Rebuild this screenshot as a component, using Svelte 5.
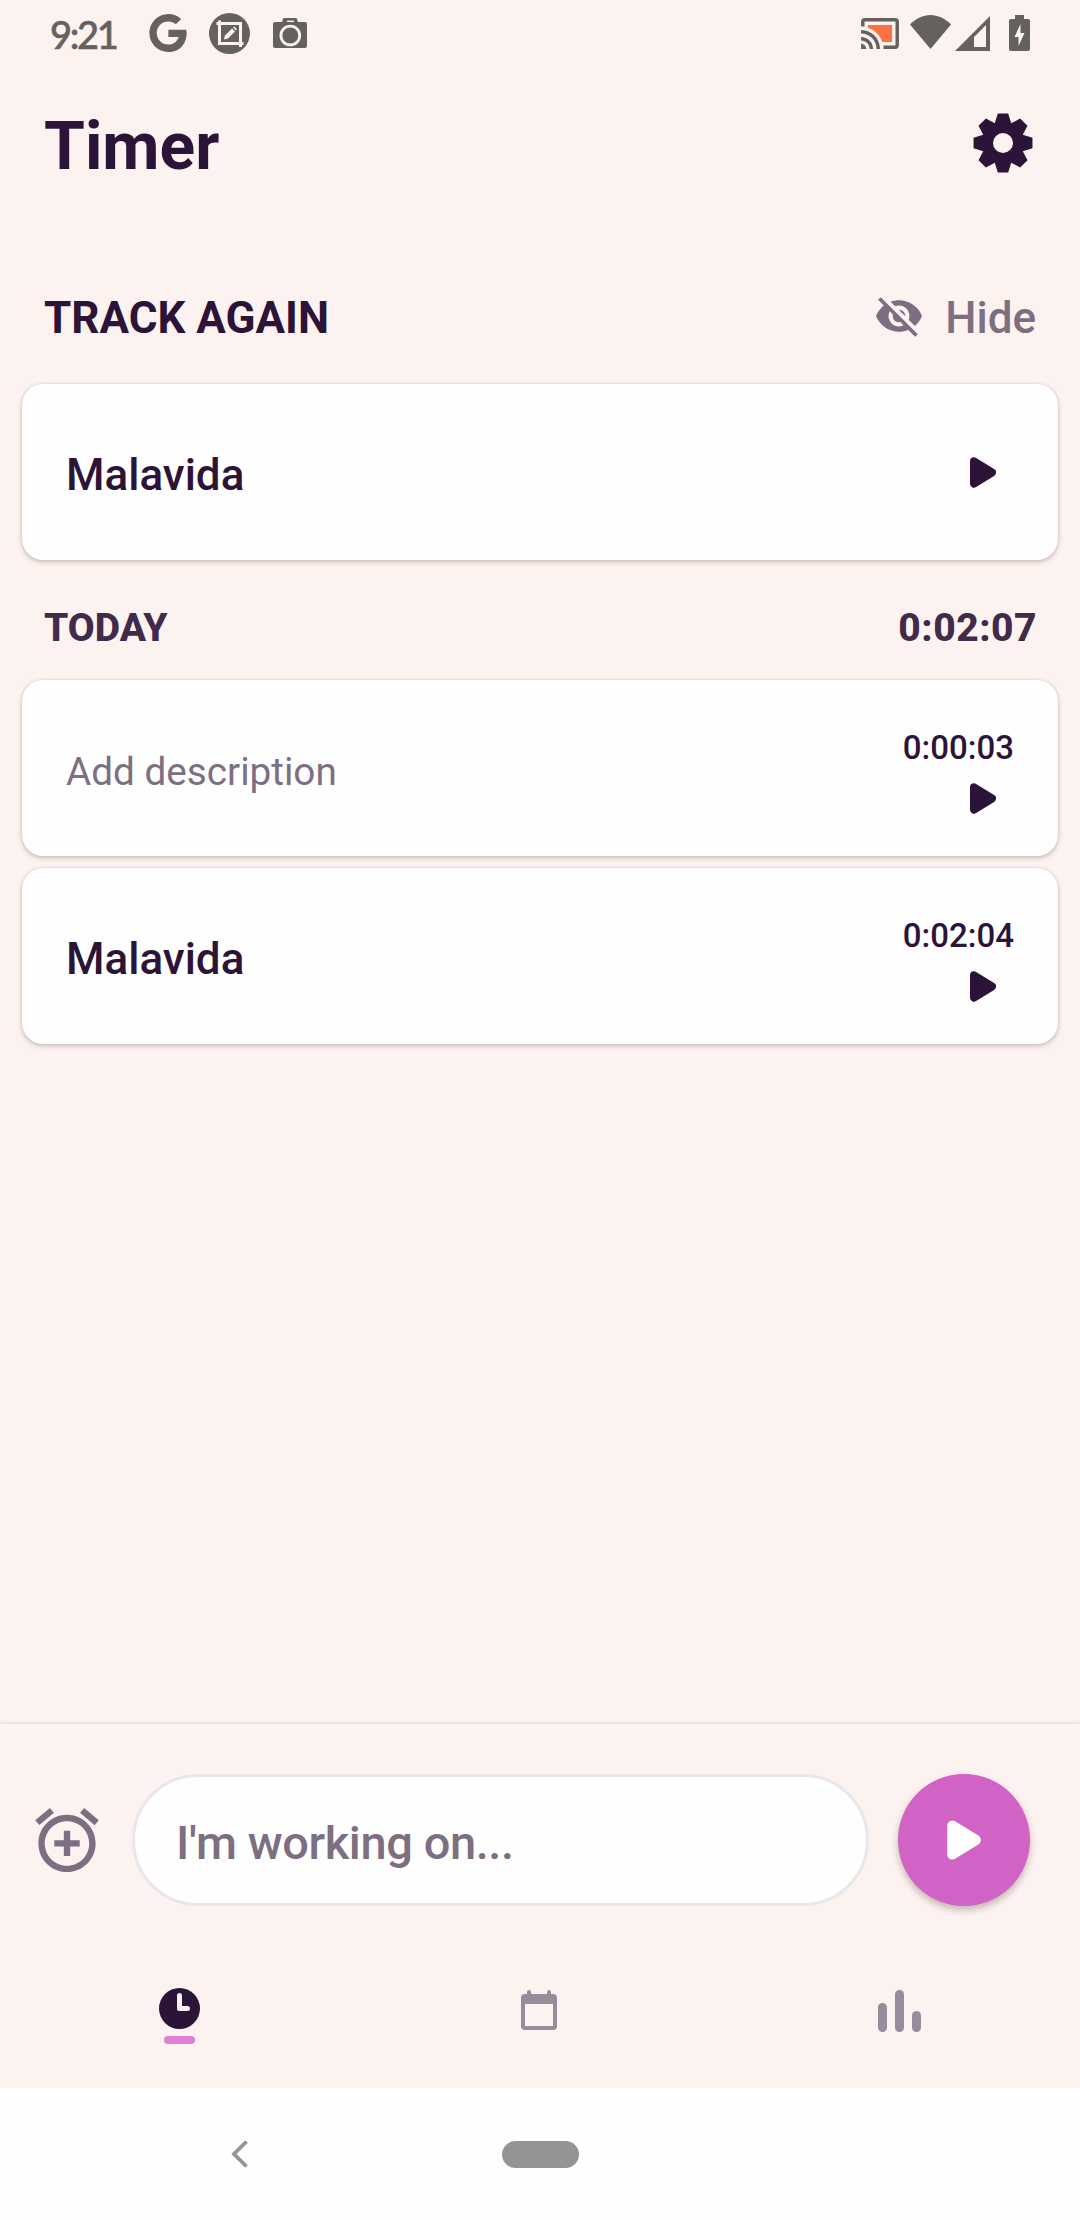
<script lang="ts">
    let clock = "9:21";
    let total = "0:02:07";

    const entries = [
        { id: 1, description: "", duration: "0:00:03" },
        { id: 2, description: "Malavida", duration: "0:02:04" },
    ];

    // eight teeth, with a single valley point between two neighbours
    const gearPoints = () => {
        const points: string[] = [];
        const add = (r: number, deg: number) => {
            const a = (deg * Math.PI) / 180;
            points.push(`${(r * Math.sin(a)).toFixed(2)},${(-r * Math.cos(a)).toFixed(2)}`);
        };
        for (let i = 0; i < 8; i++) {
            add(29.9, i * 45 - 10);
            add(29.9, i * 45 + 10);
            add(21.4, i * 45 + 22.5);
        }
        return points.join(" ");
    };
</script>

{#snippet play(width: number, height: number)}
    <svg class="play" {width} {height} viewBox="0 0 26 31">
        <path d="M4 4.3L22 15.5L4 26.7Z" fill="currentColor" stroke="currentColor" stroke-width="8" stroke-linejoin="round" />
    </svg>
{/snippet}

<div class="screen">
    <div class="status">
        <span class="clock">{clock}</span>
        <svg class="google" width="38" height="38" viewBox="2.5 2 19.7 20">
            <path fill="currentColor" d="M12.545 10.239v3.821h5.445c-.712 2.315-2.647 3.972-5.445 3.972a6.033 6.033 0 1 1 0-12.064c1.498 0 2.866.549 3.921 1.453l2.814-2.814A9.97 9.97 0 0 0 12.545 2C7.021 2 2.543 6.477 2.543 12s4.478 10 10.002 10c8.396 0 10.249-7.85 9.426-11.748z" />
        </svg>
        <svg class="crop" width="41" height="41" viewBox="0 0 41 41">
            <circle cx="20.5" cy="20.5" r="20.5" fill="currentColor" />
            <path d="M7.5 10.5H31.5V34M10.5 7.5V30.5H34.5" fill="none" stroke="#fcf2ef" stroke-width="3" />
            <path d="M15 26.5l1-4 7-7 3 3-7 7z" fill="#fcf2ef" />
            <path d="M24 14.5l1.3-1 2.7 2.7-1 1.3z" fill="#fcf2ef" />
        </svg>
        <svg class="camera" width="34" height="30" viewBox="0 0 34 30">
            <path fill="currentColor" d="M2 4h7l1.5-4h13L25 4h7a2 2 0 0 1 2 2v22a2 2 0 0 1-2 2H2a2 2 0 0 1-2-2V6a2 2 0 0 1 2-2z" />
            <circle cx="17.3" cy="17.5" r="9.4" fill="none" stroke="#fcf2ef" stroke-width="2.8" />
            <path d="M14 3.3h7" stroke="#fcf2ef" stroke-width="1.4" />
        </svg>

        <svg class="cast" width="38" height="31" viewBox="1 3 22 18">
            <path fill="currentColor" d="M1 18v3h3c0-1.66-1.34-3-3-3zm0-4v2c2.76 0 5 2.24 5 5h2c0-3.87-3.13-7-7-7zm0-4v2c4.97 0 9 4.03 9 9h2c0-6.08-4.93-11-11-11zM21 3H3c-1.1 0-2 .9-2 2v3h2V5h18v14h-7v2h7c1.1 0 2-.9 2-2V5c0-1.1-.9-2-2-2z" />
            <path fill="#ff7043" d="M19 7H5v1.63c3.96 1.28 7.09 4.41 8.37 8.37H19V7z" />
        </svg>
        <svg class="wifi" width="41" height="34" viewBox="0 0 41 34">
            <path fill="currentColor" d="M20.5 34L0 9.5C6 3.5 13 0 20.5 0S35 3.5 41 9.5z" />
        </svg>
        <svg class="signal" width="35" height="35" viewBox="0 0 35 35">
            <path fill="currentColor" fill-rule="evenodd" d="M35 0V35H0zM31 9L19 21V31H31z" />
        </svg>
        <svg class="battery" width="21" height="36" viewBox="0 0 21 36">
            <path fill="currentColor" d="M6 0h9v4h4a2 2 0 0 1 2 2v28a2 2 0 0 1-2 2H2a2 2 0 0 1-2-2V6a2 2 0 0 1 2-2h4z" />
            <path fill="#fcf2ef" d="M11.5 9L5.5 22h4v9l6-13h-4z" />
        </svg>
    </div>

    <header>
        <h1>Timer</h1>
        <svg class="gear" width="60" height="60" viewBox="-30 -30 60 60">
            <polygon points={gearPoints()} fill="currentColor" />
            <circle r="10" fill="#fcf2ef" />
        </svg>
    </header>

    <main>
        <div class="section">
            <h2>TRACK AGAIN</h2>
            <div class="hide">
                <svg width="46" height="40" viewBox="1 3 22 19">
                    <path fill="currentColor" d="M12 7c2.76 0 5 2.24 5 5 0 .65-.13 1.26-.36 1.83l2.92 2.92c1.51-1.26 2.7-2.89 3.43-4.75-1.73-4.39-6-7.5-11-7.5-1.4 0-2.74.25-3.98.7l2.16 2.16C10.74 7.13 11.35 7 12 7zM2 4.27l2.28 2.28.46.46C3.08 8.3 1.78 10.02 1 12c1.73 4.39 6 7.5 11 7.5 1.55 0 3.03-.3 4.38-.84l.42.42L19.73 22 21 20.73 3.27 3 2 4.27zM7.53 9.8l1.55 1.55c-.05.21-.08.43-.08.65 0 1.66 1.34 3 3 3 .22 0 .44-.03.65-.08l1.55 1.55c-.67.33-1.41.53-2.2.53-2.76 0-5-2.24-5-5 0-.79.2-1.53.53-2.2zm4.31-.78l3.15 3.15.02-.16c0-1.66-1.34-3-3-3l-.17.01z" />
                </svg>
                <span>Hide</span>
            </div>
        </div>
        <div class="card">
            <span class="name">Malavida</span>
            {@render play(26, 31)}
        </div>

        <div class="section today">
            <h3>TODAY</h3>
            <span class="total">{total}</span>
        </div>
        <div class="entries">
            {#each entries as entry (entry.id)}
                <div class="card">
                    <span class={entry.description ? "name" : "name empty"}>
                        {entry.description || "Add description"}
                    </span>
                    <div class="side">
                        <span class="duration">{entry.duration}</span>
                        {@render play(26, 31)}
                    </div>
                </div>
            {/each}
        </div>
    </main>

    <footer>
        <div class="composer">
            <svg class="alarm" width="64" height="64" viewBox="2 1.86 20 20.14">
                <path fill="currentColor" d="M7.88 3.39L6.6 1.86 2 5.71l1.29 1.53 4.59-3.85zM22 5.72l-4.6-3.86-1.29 1.53 4.6 3.86L22 5.72zM12 4c-4.97 0-9 4.03-9 9s4.02 9 9 9c4.97 0 9-4.03 9-9s-4.03-9-9-9zm0 16c-3.87 0-7-3.13-7-7s3.13-7 7-7 7 3.13 7 7-3.13 7-7 7zm1-11h-2v3H8v2h3v3h2v-3h3v-2h-3V9z" />
            </svg>
            <div class="field">I'm working on...</div>
            <div class="start">{@render play(34, 40)}</div>
        </div>
        <nav>
            <div class="tab active">
                <svg width="41" height="41" viewBox="0 0 41 41">
                    <circle cx="20.5" cy="20.5" r="20.5" fill="currentColor" />
                    <path d="M20.5 7.5V20.5H28.5" fill="none" stroke="#fcf2ef" stroke-width="5" stroke-linecap="round" stroke-linejoin="round" />
                </svg>
                <div class="marker"></div>
            </div>
            <div class="tab">
                <svg width="36" height="40" viewBox="0 0 36 40">
                    <path fill="currentColor" fill-rule="evenodd" d="M6 2a2 2 0 0 1 4 0V4H26V2a2 2 0 0 1 4 0V4H32a4 4 0 0 1 4 4V36a4 4 0 0 1-4 4H4a4 4 0 0 1-4-4V8a4 4 0 0 1 4-4H6zM4 14V36H32V14z" />
                </svg>
            </div>
            <div class="tab">
                <svg width="43" height="42" viewBox="0 0 43 42">
                    <g fill="currentColor">
                        <rect x="0" y="13" width="9" height="29" rx="4.5" />
                        <rect x="17" y="0" width="9" height="42" rx="4.5" />
                        <rect x="34" y="21" width="9" height="21" rx="4.5" />
                    </g>
                </svg>
            </div>
        </nav>
    </footer>

    <div class="system">
        <svg width="17" height="28" viewBox="0 0 17 28">
            <path d="M15.5 1.5L3 14L15.5 26.5" fill="none" stroke="currentColor" stroke-width="3.8" />
        </svg>
        <div class="home"></div>
    </div>
</div>

<style>
    :global(body) {
        margin: 0;
        background: #fcf2ef;
    }

    svg {
        display: block;
        flex-shrink: 0;
    }

    .screen {
        display: flex;
        flex-direction: column;
        width: 1080px;
        height: 2220px;
        overflow: hidden;
        background: #fcf2ef;
        color: #2c1338;
        font-family: Roboto, sans-serif;
    }

    .status {
        display: flex;
        align-items: center;
        height: 66px;
        color: #656160;
    }

    .clock {
        width: 99px;
        padding-top: 2px;
        padding-left: 50px;
        font-family: Lato, sans-serif;
        font-size: 38px;
        font-weight: 500;
        letter-spacing: -2.3px;
        -webkit-text-stroke: 0.6px #656160;
    }

    .crop {
        margin-left: 22px;
    }

    .camera {
        margin-left: 23px;
    }

    .cast {
        margin-left: auto;
    }

    .wifi {
        margin: 0 4px 2px 11px;
    }

    .battery {
        margin: 0 50px 0 19px;
    }

    header {
        display: flex;
        align-items: center;
        justify-content: space-between;
        height: 161px;
        margin-bottom: 25px;
        padding: 0 47px 0 44px;
    }

    h1, h2, h3 {
        margin: 0;
    }

    h1 {
        font-size: 66px;
        font-weight: 700;
    }

    .gear {
        margin-bottom: 8px;
    }

    main {
        flex: 1;
    }

    .section {
        display: flex;
        align-items: center;
        justify-content: space-between;
        box-sizing: border-box;
        height: 132px;
        padding: 0 44px;
    }

    h2 {
        font-size: 44px;
        font-weight: 700;
    }

    .hide {
        display: flex;
        align-items: center;
        gap: 23px;
        color: #7d6e82;
        font-size: 44px;
        font-weight: 500;
    }

    .hide svg {
        margin-bottom: 2px;
    }

    .today {
        height: 120px;
        padding-top: 15px;
        color: #412a4a;
        font-size: 39px;
        font-weight: 800;
    }

    h3 {
        font-size: 39px;
        font-weight: 800;
    }

    .total {
        margin-right: -1px;
        letter-spacing: 0.5px;
    }

    .card {
        display: flex;
        align-items: center;
        justify-content: space-between;
        height: 176px;
        margin: 0 22px;
        padding: 0 44px;
        box-sizing: border-box;
        border-radius: 21px;
        background: #fefefe;
        box-shadow: 0 2px 5px rgba(70, 40, 40, 0.25), 0 0 2px rgba(70, 40, 40, 0.15);
    }

    .name {
        padding-top: 6px;
        font-size: 44px;
        font-weight: 500;
    }

    .empty {
        color: #7d6e82;
        font-size: 38.7px;
        font-weight: 400;
    }

    .play {
        margin-right: 18px;
    }

    .entries {
        display: flex;
        flex-direction: column;
        gap: 12px;
    }

    .side {
        display: flex;
        flex-direction: column;
        align-items: flex-end;
        gap: 15px;
        padding-top: 6px;
    }

    .duration {
        font-size: 33px;
        font-weight: 500;
        line-height: 40px;
    }

    footer {
        box-shadow: 0 -1px 3px rgba(70, 40, 40, 0.12);
    }

    .composer {
        display: flex;
        align-items: center;
        height: 232px;
        padding: 0 50px 0 35px;
    }

    .alarm {
        color: #7d6e82;
    }

    .field {
        flex: 1;
        height: 132px;
        margin: 0 29px 0 33px;
        padding: 3px 0 0 41px;
        box-sizing: border-box;
        border: 3px solid #eae6ea;
        border-radius: 66px;
        background: #fefefe;
        color: #7d6e82;
        font-size: 47px;
        font-weight: 500;
        line-height: 126px;
        letter-spacing: -0.4px;
    }

    .start {
        display: flex;
        align-items: center;
        justify-content: center;
        width: 132px;
        height: 132px;
        border-radius: 50%;
        background: #d063c5;
        color: #fefefe;
        box-shadow: 0 4px 7px rgba(70, 40, 40, 0.3);
    }

    .start .play {
        margin-right: 0;
    }

    nav {
        display: grid;
        grid-template-columns: repeat(3, 1fr);
        height: 132px;
        color: #988b9c;
    }

    .tab {
        display: flex;
        flex-direction: column;
        align-items: center;
        padding: 34px 2px 0 0;
    }

    .active {
        padding-top: 32px;
        color: #2c1338;
    }

    .marker {
        width: 31px;
        height: 8px;
        margin-top: 7px;
        border-radius: 4px;
        background: #e07fd6;
    }

    .system {
        display: flex;
        align-items: center;
        height: 132px;
        padding-left: 231px;
        background: #fefefe;
        color: #949494;
    }

    .home {
        width: 77px;
        height: 27px;
        margin-left: 254px;
        border-radius: 14px;
        background: #949494;
    }
</style>
